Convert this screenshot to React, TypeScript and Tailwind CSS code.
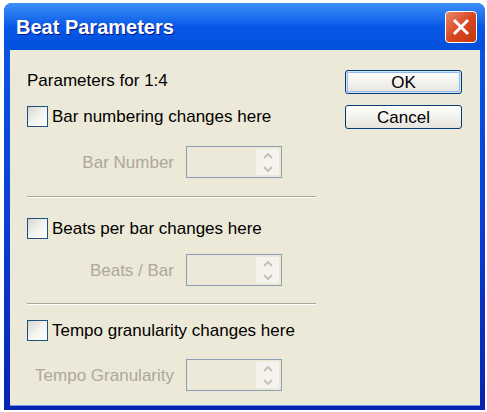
const font = { fontFamily: '"Liberation Sans", Arial, sans-serif' };

function Checkbox({ label }: { label: string }) {
  return (
    <div className="flex items-center h-[21px] gap-[4px]">
      <span className="w-[21px] h-[21px] border border-[#1c5180] bg-gradient-to-br from-[#d6d5cc] via-[#f3f3ef] to-white" />
      <span className="text-[17px] text-black leading-none">{label}</span>
    </div>
  );
}

function SpinRow({ label }: { label: string }) {
  return (
    <div className="flex items-center h-[32px]">
      <span className="w-[147px] text-right text-[17px] leading-none text-[#aca899]">{label}</span>
      <div className="ml-[12px] w-[96px] h-[32px] border border-[#8a9fb4] bg-[#ece9d8] flex justify-end p-[2px]">
        <div className="w-[23px] h-full flex flex-col bg-[#f4f3ee]">
          <div className="flex-1 flex items-center justify-center">
            <svg width="10" height="6" viewBox="0 0 10 6">
              <path d="M1 5 L5 1 L9 5" fill="none" stroke="#c5c2b2" strokeWidth="2" />
            </svg>
          </div>
          <div className="flex-1 flex items-center justify-center">
            <svg width="10" height="6" viewBox="0 0 10 6">
              <path d="M1 1 L5 5 L9 1" fill="none" stroke="#c5c2b2" strokeWidth="2" />
            </svg>
          </div>
        </div>
      </div>
    </div>
  );
}

function Separator() {
  return <div className="w-[289px] h-[2px] border-t border-[#aca899] border-b border-b-white" />;
}

export default function App() {
  return (
    <div className="w-[487px] h-[412px] bg-white overflow-hidden" style={font}>
      <div className="ml-[4px] mt-[3px] w-[481px] h-[407px] flex flex-col rounded-t-[8px] overflow-hidden bg-gradient-to-b from-[#0a5be6] via-[#0a3fd8] to-[#0a22b0]">
        {/* Title bar */}
        <div className="h-[47px] flex items-center justify-between pl-[12px] pr-[8px] bg-gradient-to-b from-[#3d8ff6] via-[#0858e8] to-[#0250dc]">
          <span className="text-white font-bold text-[20px] [text-shadow:1px_1px_0_#0a1883]">Beat Parameters</span>
          <button className="w-[32px] h-[32px] rounded-[4px] border border-white bg-gradient-to-br from-[#e9856a] via-[#d9471f] to-[#c2380f] flex items-center justify-center">
            <svg width="18" height="18" viewBox="0 0 18 18">
              <path d="M3 3 L15 15 M15 3 L3 15" stroke="white" strokeWidth="3" strokeLinecap="square" />
            </svg>
          </button>
        </div>

        {/* Client area */}
        <div className="flex-1 ml-[6px] mr-[5px] mb-[5px] bg-[#ece9d8] flex pl-[17px] shadow-[0_1px_0_#6f9af0]">
          <div className="w-[290px] flex flex-col">
            <div className="mt-[21px] h-[20px] flex items-center text-[17px] text-black">Parameters for 1:4</div>
            <div className="mt-[15px]"><Checkbox label="Bar numbering changes here" /></div>
            <div className="mt-[19px]"><SpinRow label="Bar Number" /></div>
            <div className="mt-[18px]"><Separator /></div>
            <div className="mt-[20px]"><Checkbox label="Beats per bar changes here" /></div>
            <div className="mt-[15px]"><SpinRow label="Beats / Bar" /></div>
            <div className="mt-[17px]"><Separator /></div>
            <div className="mt-[15px]"><Checkbox label="Tempo granularity changes here" /></div>
            <div className="mt-[18px]"><SpinRow label="Tempo Granularity" /></div>
          </div>

          <div className="ml-[28px] flex flex-col">
            <button className="mt-[20px] w-[117px] h-[24px] rounded-[3px] border border-[#003c74] bg-gradient-to-b from-white to-[#e6e4dc] shadow-[inset_0_0_0_1px_#cee7ff,inset_0_0_0_2px_#98b8ea] text-[17px] leading-none text-black">
              OK
            </button>
            <button className="mt-[11px] w-[117px] h-[24px] rounded-[3px] border border-[#003c74] bg-gradient-to-b from-white to-[#e6e4dc] text-[17px] leading-none text-black">
              Cancel
            </button>
          </div>
        </div>
      </div>
    </div>
  );
}
